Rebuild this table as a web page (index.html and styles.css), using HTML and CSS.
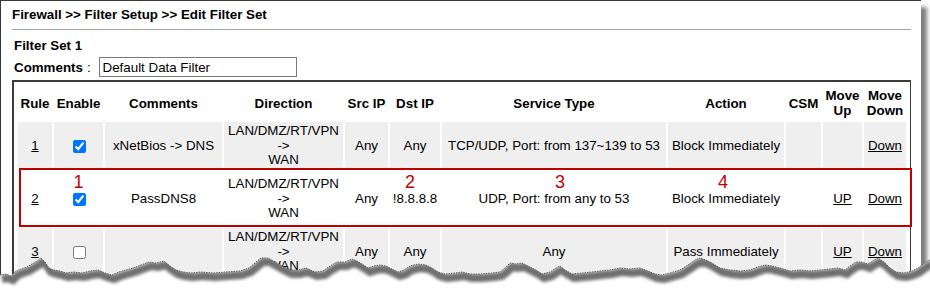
FILE: index.html
```html
<!DOCTYPE html>
<html lang="en">
<head>
<meta charset="utf-8">
<title>Edit Filter Set</title>
<link rel="stylesheet" href="styles.css">
</head>
<body>
<div class="page">
  <h1 class="title">Firewall &gt;&gt; Filter Setup &gt;&gt; Edit Filter Set</h1>
  <div class="title-rule"></div>

  <div class="set">
    <div class="set-name">Filter Set 1</div>
    <div class="set-comments">
      <b>Comments</b><span class="colon">:</span>
      <input class="comment-input" type="text" value="Default Data Filter">
    </div>
  </div>

  <div class="grid-box">
    <table class="rules">
      <colgroup>
        <col class="c-rule"><col class="c-enable"><col class="c-comments"><col class="c-dir">
        <col class="c-src"><col class="c-dst"><col class="c-svc"><col class="c-act">
        <col class="c-csm"><col class="c-up"><col class="c-down">
      </colgroup>
      <thead>
        <tr>
          <th>Rule</th><th>Enable</th><th>Comments</th><th>Direction</th>
          <th>Src IP</th><th>Dst IP</th><th>Service Type</th><th>Action</th>
          <th>CSM</th><th>Move<br>Up</th><th>Move<br>Down</th>
        </tr>
      </thead>
      <tbody>
        <tr class="shade">
          <td><a href="#">1</a></td>
          <td><input type="checkbox" checked></td>
          <td>xNetBios -&gt; DNS</td>
          <td>LAN/DMZ/RT/VPN<br>-&gt;<br>WAN</td>
          <td>Any</td>
          <td>Any</td>
          <td>TCP/UDP, Port: from 137~139 to 53</td>
          <td>Block Immediately</td>
          <td></td>
          <td></td>
          <td><a href="#">Down</a></td>
        </tr>
        <tr class="picked">
          <td><a href="#">2</a></td>
          <td><span class="tag">1</span><input type="checkbox" checked></td>
          <td>PassDNS8</td>
          <td>LAN/DMZ/RT/VPN<br>-&gt;<br>WAN</td>
          <td>Any</td>
          <td><span class="tag tag-dst">2</span>!8.8.8.8</td>
          <td><span class="tag tag-svc">3</span>UDP, Port: from any to 53</td>
          <td><span class="tag tag-act">4</span>Block Immediately</td>
          <td></td>
          <td><a href="#">UP</a></td>
          <td><a href="#">Down</a></td>
        </tr>
        <tr class="shade">
          <td><a href="#">3</a></td>
          <td><input type="checkbox"></td>
          <td></td>
          <td>LAN/DMZ/RT/VPN<br>-&gt;<br>WAN</td>
          <td>Any</td>
          <td>Any</td>
          <td>Any</td>
          <td>Pass Immediately</td>
          <td></td>
          <td><a href="#">UP</a></td>
          <td><a href="#">Down</a></td>
        </tr>
      </tbody>
    </table>
    <div class="callout"></div>
  </div>
</div>

<svg class="tear" width="930" height="289" viewBox="0 0 930 289" aria-hidden="true">
  <defs>
    <path id="edge" d="M0,275 L6,274 L11,276 L16,271 L21,269 L27,267 L32,264 L37,261 L41,258 L45,262 L49,268 L54,270 L60,271 L66,273 L74,272 L82,273 L90,271 L98,270 L105,273 L112,275 L119,272 L126,270 L133,268 L141,265 L149,262 L156,263 L164,261 L170,266 L176,270 L183,272 L191,273 L201,272 L213,273 L226,272 L240,271 L249,268 L255,263 L261,258 L268,258 L275,262 L282,266 L290,270 L298,270 L306,268 L315,272 L323,271 L330,266 L337,262 L345,262 L352,259 L357,261 L362,264 L368,268 L374,266 L380,265 L386,266 L392,269 L398,272 L404,270 L410,266 L418,264 L426,265 L432,268 L438,272 L445,274 L455,273 L462,272 L470,274 L480,274 L492,273 L500,272 L505,268 L510,263 L516,264 L522,263 L530,267 L536,270 L542,274 L550,272 L556,268 L560,266 L565,270 L572,274 L582,273 L592,272 L600,271 L610,270 L620,268 L630,269 L640,268 L648,271 L655,274 L662,275 L670,273 L680,270 L688,265 L695,260 L700,258 L706,260 L712,263 L720,268 L730,270 L740,271 L750,270 L758,267 L765,265 L772,266 L780,268 L790,271 L800,270 L810,271 L820,270 L830,269 L838,268 L845,270 L850,266 L856,262 L862,262 L868,264 L874,260 L878,258 L884,262 L890,268 L896,272 L904,273 L912,271 L918,268 L922,265 L926,262 L930,260"/>
    <path id="lower" d="M0,275 L6,274 L11,276 L16,271 L21,269 L27,267 L32,264 L37,261 L41,258 L45,262 L49,268 L54,270 L60,271 L66,273 L74,272 L82,273 L90,271 L98,270 L105,273 L112,275 L119,272 L126,270 L133,268 L141,265 L149,262 L156,263 L164,261 L170,266 L176,270 L183,272 L191,273 L201,272 L213,273 L226,272 L240,271 L249,268 L255,263 L261,258 L268,258 L275,262 L282,266 L290,270 L298,270 L306,268 L315,272 L323,271 L330,266 L337,262 L345,262 L352,259 L357,261 L362,264 L368,268 L374,266 L380,265 L386,266 L392,269 L398,272 L404,270 L410,266 L418,264 L426,265 L432,268 L438,272 L445,274 L455,273 L462,272 L470,274 L480,274 L492,273 L500,272 L505,268 L510,263 L516,264 L522,263 L530,267 L536,270 L542,274 L550,272 L556,268 L560,266 L565,270 L572,274 L582,273 L592,272 L600,271 L610,270 L620,268 L630,269 L640,268 L648,271 L655,274 L662,275 L670,273 L680,270 L688,265 L695,260 L700,258 L706,260 L712,263 L720,268 L730,270 L740,271 L750,270 L758,267 L765,265 L772,266 L780,268 L790,271 L800,270 L810,271 L820,270 L830,269 L838,268 L845,270 L850,266 L856,262 L862,262 L868,264 L874,260 L878,258 L884,262 L890,268 L896,272 L904,273 L912,271 L918,268 L922,265 L926,262 L930,260 L930,300 L0,300 Z"/>
    <clipPath id="under"><use href="#lower"/></clipPath>
    <filter id="soft" filterUnits="userSpaceOnUse" x="-20" y="230" width="980" height="80">
      <feGaussianBlur stdDeviation="1.6"/>
    </filter>
  </defs>
  <!-- paper below the torn edge -->
  <use href="#lower" fill="#ffffff"/>
  <!-- drop shadow cast by the torn edge -->
  <g clip-path="url(#under)">
    <use href="#edge" transform="translate(2,4)" fill="none" stroke="#6f6f6f" stroke-width="8" filter="url(#soft)"/>
  </g>
  <!-- ragged outline -->
  <use href="#edge" fill="none" stroke="#4a4a4a" stroke-width="0.9" stroke-dasharray="1.5 1"/>
</svg>
</body>
</html>
```

FILE: styles.css
```css
html, body {
  margin: 0;
  padding: 0;
}

body {
  position: relative;
  width: 930px;
  height: 289px;
  overflow: hidden;
  background: #ffffff;
  font-family: "Liberation Sans", Arial, sans-serif;
  font-size: 13.33px;
  color: #000000;
}

/* framed page with a drop shadow */
.page {
  box-sizing: border-box;
  width: 921px;
  min-height: 330px;
  border-left: 1px solid #3a3a3a;
  border-top: 1px solid #3a3a3a;
  padding: 0 10px 0 11px;
  background: #ffffff;
  box-shadow: 6px 7px 4px rgba(0, 0, 0, 0.5);
}

.title {
  margin: 0;
  padding-top: 6px;
  font-size: 13.33px;
  line-height: 15px;
  font-weight: bold;
}

.title-rule {
  margin-top: 7px;
  border-top: 1px solid #a3a3a3;
}

.set {
  padding-left: 2px;
}

.set-name {
  margin-top: 8px;
  font-weight: bold;
  line-height: 15px;
}

.set-comments {
  margin-top: 4px;
  height: 20px;
  display: flex;
  align-items: center;
  line-height: 15px;
}

.colon {
  margin-left: 4px;
}

.comment-input {
  box-sizing: border-box;
  margin: 0 0 0 8px;
  width: 198px;
  height: 20px;
  padding: 0 3px;
  border: 1px solid #7a7a7a;
  border-radius: 0;
  font-family: "Liberation Sans", Arial, sans-serif;
  font-size: 13.33px;
  color: #000000;
  background: #ffffff;
}

/* rule table */
.grid-box {
  position: relative;
  margin-top: 3px;
  border-left: 2px solid #3c3c3c;
  border-top: 2px solid #3c3c3c;
  border-right: 1px solid #3c3c3c;
  padding: 2px;
}

.rules {
  width: 892px;
  table-layout: fixed;
  border-collapse: separate;
  border-spacing: 2px;
}

.c-rule { width: 34px; }
.c-enable { width: 49px; }
.c-comments { width: 117px; }
.c-dir { width: 119px; }
.c-src { width: 43px; }
.c-dst { width: 50px; }
.c-svc { width: 224px; }
.c-act { width: 116px; }
.c-csm { width: 35px; }
.c-up { width: 39px; }
.c-down { width: 42px; }

.rules th {
  padding: 2px 0;
  font-weight: bold;
  line-height: 15px;
  text-align: center;
  vertical-align: middle;
}

.rules tbody tr {
  height: 46px;
}

.rules td {
  position: relative;
  padding: 2px 0 0;
  line-height: 14.5px;
  text-align: center;
  vertical-align: middle;
  white-space: nowrap;
}

.shade td {
  background: #efefef;
}

.rules tbody tr.picked {
  height: 56px;
}

.picked td {
  background: #ffffff;
}

.rules a {
  color: #000000;
  text-decoration: underline;
}

.rules input[type="checkbox"] {
  width: 13px;
  height: 13px;
  vertical-align: middle;
}

/* numbered markers and the frame around the highlighted rule */
.tag {
  position: absolute;
  top: 3px;
  left: 50%;
  transform: translateX(-50%);
  font-size: 18px;
  line-height: 18px;
  color: #c40000;
}

.tag-dst { margin-left: -5px; }
.tag-svc { margin-left: 6px; }
.tag-act { margin-left: -3px; }

.callout {
  position: absolute;
  left: 5px;
  top: 86px;
  width: 893px;
  height: 59px;
  box-sizing: border-box;
  border: 2px solid #c00000;
  pointer-events: none;
}

.tear {
  position: absolute;
  left: 0;
  top: 0;
  pointer-events: none;
}
```
